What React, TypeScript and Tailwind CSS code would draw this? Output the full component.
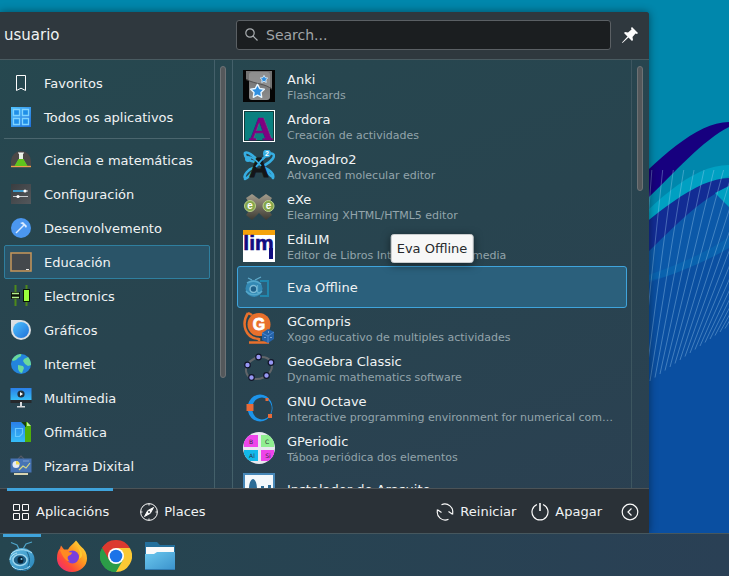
import React, { useState } from "react";

interface Category {
  name: string;
  icon: React.ReactNode;
}

interface AppEntry {
  name: string;
  description?: string;
  icon: React.ReactNode;
}

const Icon22 = ({ children }: { children: React.ReactNode }) => (
  <svg className="size-[22px] shrink-0" viewBox="0 0 22 22" fill="none" aria-hidden="true">
    {children}
  </svg>
);

const Icon32 = ({ children }: { children: React.ReactNode }) => (
  <svg className="size-8 shrink-0" viewBox="0 0 32 32" fill="none" aria-hidden="true">
    {children}
  </svg>
);

const Defs = () => (
  <svg className="absolute size-0" aria-hidden="true">
    <defs>
      <linearGradient id="blue" x1="0" y1="0" x2="1" y2="1">
        <stop offset="0" stopColor="#4fc3ff" />
        <stop offset="1" stopColor="#1f6fd8" />
      </linearGradient>
      <linearGradient id="azure" x1="0" y1="0" x2="0" y2="1">
        <stop offset="0" stopColor="#2a7fe8" />
        <stop offset="1" stopColor="#35bdf8" />
      </linearGradient>
      <linearGradient id="slate" x1="0" y1="0" x2="1" y2="1">
        <stop offset="0" stopColor="#3a3d40" />
        <stop offset="1" stopColor="#54585c" />
      </linearGradient>
      <linearGradient id="anki" x1="0" y1="0" x2="0" y2="1">
        <stop offset="0" stopColor="#6c6c6c" />
        <stop offset="1" stopColor="#8e8e8e" />
      </linearGradient>
      <linearGradient id="exe" x1="0" y1="0" x2="0" y2="1">
        <stop offset="0" stopColor="#a39c8c" />
        <stop offset="1" stopColor="#3c3a32" />
      </linearGradient>
      <linearGradient id="fox" x1="1" y1="0" x2="0" y2="1">
        <stop offset="0" stopColor="#fff044" />
        <stop offset="0.4" stopColor="#ff9a1f" />
        <stop offset="0.7" stopColor="#ff4a3a" />
        <stop offset="1" stopColor="#e8208a" />
      </linearGradient>
      <linearGradient id="folder" x1="0" y1="0" x2="1" y2="1">
        <stop offset="0" stopColor="#6cc8ee" />
        <stop offset="1" stopColor="#3a92cc" />
      </linearGradient>
      <linearGradient id="ball" x1="0" y1="0" x2="1" y2="1">
        <stop offset="0" stopColor="#64bce2" />
        <stop offset="1" stopColor="#2683b8" />
      </linearGradient>
    </defs>
  </svg>
);

const topCategories: Category[] = [
  {
    name: "Favoritos",
    icon: (
      <Icon22>
        <path d="M6.5 3.5h9v15l-4.5-2.3-4.5 2.3z" stroke="#fcfcfc" />
      </Icon22>
    ),
  },
  {
    name: "Todos os aplicativos",
    icon: (
      <Icon22>
        <rect x="1" y="1" width="20" height="20" fill="url(#blue)" />
        <path d="M3.5 3.5h6v6h-6zM12.5 3.5h6v6h-6zM3.5 12.5h6v6h-6zM12.5 12.5h6v6h-6z" fill="#1f8fe8" stroke="#7fd3ff" strokeWidth="1.3" />
      </Icon22>
    ),
  },
];

const categories: Category[] = [
  {
    name: "Ciencia e matemáticas",
    icon: (
      <Icon22>
        <path d="M1 17V12a10 10 0 0 1 20 0v5z" fill="#4b4847" />
        <path d="M1 17.5h20" stroke="#f0a04c" strokeWidth="1.4" />
        <path d="M9 4h4v6l4 7H5l4-7z" fill="#e8f0e4" />
        <path d="M8.500 10h5l4 7h-13z" fill="#5fc41c" />
        <path d="M8 4h6" stroke="#fff" />
      </Icon22>
    ),
  },
  {
    name: "Configuración",
    icon: (
      <Icon22>
        <rect x="1" y="1" width="20" height="20" fill="url(#slate)" />
        <path d="M3 8h12" stroke="#3daee9" strokeWidth="1.6" />
        <path d="M15 8h3M3 13.500h15" stroke="#c8ccd0" />
        <circle cx="15" cy="8" r="1.6" fill="#fff" />
        <circle cx="8" cy="13.500" r="1.6" fill="#fff" />
      </Icon22>
    ),
  },
  {
    name: "Desenvolvemento",
    icon: (
      <Icon22>
        <circle cx="11" cy="11" r="10" fill="#4b97f0" />
        <path d="m6 16 8-8" stroke="#dcecff" strokeWidth="1.4" />
        <path d="m10 6 3-1 4 4-1 2-2.500-3z" fill="#dcecff" />
      </Icon22>
    ),
  },
  {
    name: "Educación",
    icon: (
      <Icon22>
        <rect x="1" y="2" width="20" height="18" fill="#44484c" stroke="#c0935a" strokeWidth="1.6" />
        <path d="M16 18.5h3" stroke="#e6e6e6" />
      </Icon22>
    ),
  },
  {
    name: "Electronics",
    icon: (
      <Icon22>
        <path d="M5.500 0v21M16.500 0v21" stroke="#4e8a1a" strokeWidth="2" />
        <rect x="1" y="7" width="9" height="7" fill="#0c1408" />
        <path d="M2 8.500h7M2 12.500h7" stroke="#b4f08c" strokeWidth="1.300" />
        <rect x="13.500" y="4.500" width="6" height="12" fill="#9bff3c" stroke="#0a1404" />
      </Icon22>
    ),
  },
  {
    name: "Gráficos",
    icon: (
      <Icon22>
        <path d="M1 1h10a10 10 0 1 1-10 10z" fill="#dcdfe2" />
        <circle cx="11" cy="11" r="8" fill="url(#blue)" />
      </Icon22>
    ),
  },
  {
    name: "Internet",
    icon: (
      <Icon22>
        <circle cx="11" cy="11" r="10" fill="#2384dc" />
        <path d="M2 7c2-4 6-6 9-6 1 2-1 3-3 4l-2 2-3 1zM8 12l5 1 1 2-2 5c-2 0-4-3-4-5zM14 6l4-2c2 2 3 5 3 8l-3 1-3-2-2-3z" fill="#6ad89a" />
      </Icon22>
    ),
  },
  {
    name: "Multimedia",
    icon: (
      <Icon22>
        <rect x="0.500" y="1" width="21" height="12" fill="url(#azure)" />
        <path d="M.5 13h21v3H.5z" fill="#26292c" />
        <path d="M10 15h2v4h3v1.500H7V19h3z" fill="#d6d9dc" />
        <circle cx="11" cy="7" r="3.600" fill="#24303c" />
        <path d="m10 5 3 2-3 2z" fill="#fff" />
      </Icon22>
    ),
  },
  {
    name: "Ofimática",
    icon: (
      <Icon22>
        <path d="M9 1h8l4 4v16H9z" fill="#4fae0a" />
        <path d="m17 1 4 4h-4z" fill="#c4f08c" />
        <path d="M11 1h5v5h-1z" fill="#1c3c10" />
        <path d="M1 1h10l4 4v16H1z" fill="url(#azure)" />
        <path d="M5.500 7.500h7v5l-3 3h-4z" stroke="#67c8ff" strokeWidth="1.200" />
      </Icon22>
    ),
  },
  {
    name: "Pizarra Dixital",
    icon: (
      <Icon22>
        <path d="m8 4 3-3 3 3" stroke="#555a66" strokeWidth="1.200" />
        <rect x="0.500" y="3.500" width="21" height="14" fill="#4773b4" />
        <circle cx="6" cy="9.500" r="3.500" fill="#e6ecf4" />
        <path d="M6 9.500V6a3.500 3.500 0 0 1 3.500 3.500z" fill="#f2dc50" />
        <path d="m9 15 4-4 3 2 4-5" stroke="#d8d880" strokeWidth="1.200" />
        <path d="M13 6h6" stroke="#7fa0d0" />
        <path d="M4 18h14v2H4z" fill="#d8d4b0" />
      </Icon22>
    ),
  },
];

const Star = () => (
  <path d="m0-6 2 3.700 4.200.7-3 3 .6 4.300L0 3.800l-3.800 1.900.6-4.300-3-3 4.200-.7z" fill="#2f8fe0" stroke="#e8f6ff" strokeWidth="1.300" strokeLinejoin="round" />
);

const apps: AppEntry[] = [
  {
    name: "Anki",
    description: "Flashcards",
    icon: (
      <Icon32>
        <rect width="32" height="32" fill="#050505" />
        <rect x="6" y="2" width="21" height="28" rx="3" fill="url(#anki)" />
        <path d="M3 1h26v18c-6-6-16-5-26-10z" fill="#9a9a9a" fillOpacity="0.75" />
        <path d="M3 9.500c10 5 20 4 26 10" stroke="#4a4a4a" strokeWidth="0.800" />
        <g transform="translate(21 9) scale(.6)"><Star /></g>
        <g transform="translate(14.500 21) scale(1.100)"><Star /></g>
      </Icon32>
    ),
  },
  {
    name: "Ardora",
    description: "Creación de actividades",
    icon: (
      <Icon32>
        <rect width="32" height="32" fill="#fff" />
        <rect x="1.500" y="1.500" width="29" height="29" fill="#0a8080" stroke="#103c3c" />
        <text x="18" y="30" textAnchor="middle" fill="#800080" stroke="#800080" strokeWidth="0.600" fontSize="33" fontWeight="700" fontFamily="Liberation Serif, serif">A</text>
      </Icon32>
    ),
  },
  {
    name: "Avogadro2",
    description: "Advanced molecular editor",
    icon: (
      <Icon32>
        <path d="M2 3c2-2 8 2 14 9s11 15 14 15M2 29c5-1 9-10 14-16S27 2 30 4s-2 8-8 11M2 3c-1 4 4 8 10 9M2 28c-2-3 4-9 8-10M22 18c6 3 9 7 8 10" stroke="#36aee2" strokeWidth="2.600" strokeLinecap="round" />
        <text x="16" y="27" textAnchor="middle" fill="#141618" stroke="#141618" fontSize="27" fontWeight="700" fontFamily="Liberation Sans, sans-serif">A</text>
        <path d="M7 7c3 1 8 5 11 9M13 17c3-4 6-8 9-10" stroke="#36aee2" strokeWidth="1.800" />
        <circle cx="5" cy="9" r="3" fill="#36aee2" />
        <circle cx="24" cy="3.500" r="4" fill="#36aee2" />
        <text x="24" y="6" textAnchor="middle" fill="#fff" fontSize="7" fontWeight="700" fontFamily="Liberation Sans, sans-serif">2</text>
      </Icon32>
    ),
  },
  {
    name: "eXe",
    description: "Elearning XHTML/HTML5 editor",
    icon: (
      <Icon32>
        <path d="m3 8 6-4 7 5 7-5 6 4-6 9 6 8-6 5-7-7-7 7-6-5 6-8z" fill="url(#exe)" />
        <circle cx="7" cy="16" r="5.500" fill="#86a74a" stroke="#b9cf8c" />
        <circle cx="25.500" cy="16" r="5.500" fill="#86a74a" stroke="#b9cf8c" />
        <text x="7" y="19" textAnchor="middle" fill="#fff" fontSize="10" fontWeight="700" fontFamily="Liberation Sans, sans-serif">e</text>
        <text x="25.500" y="19" textAnchor="middle" fill="#fff" fontSize="10" fontWeight="700" fontFamily="Liberation Sans, sans-serif">e</text>
      </Icon32>
    ),
  },
  {
    name: "EdiLIM",
    description: "Editor de Libros Interactivos Multimedia",
    icon: (
      <Icon32>
        <rect width="32" height="32" fill="#fff" />
        <rect width="32" height="5" fill="#f5a20a" />
        <text x="15.500" y="20" textAnchor="middle" fill="#100c80" stroke="#100c80" strokeWidth="0.600" fontSize="21" fontWeight="700" fontFamily="Liberation Sans, sans-serif">lim</text>
        <rect x="26" y="18" width="4" height="11" fill="#100c80" />
      </Icon32>
    ),
  },
  {
    name: "Eva Offline",
    icon: (
      <Icon32>
        <path d="M17 10h8v15h-8" stroke="#2186ac" strokeWidth="2" />
        <circle cx="11" cy="17.500" r="8.500" fill="#3389b4" />
        <path d="M4 12c5-3 10-2 14 1M3 20c4 5 12 5 16 0" stroke="#55a7ca" strokeWidth="1.500" />
        <circle cx="10.500" cy="18" r="3.500" fill="#1f6088" stroke="#7dbbd6" strokeWidth="1.500" />
        <path d="M14.500 14v7c1 1 2 1 3 0M9 9 5 7M12 9l6-3" stroke="#5fabcc" strokeWidth="1.200" />
      </Icon32>
    ),
  },
  {
    name: "GCompris",
    description: "Xogo educativo de multiples actividades",
    icon: (
      <Icon32>
        <path d="M5 1C-2 12 2 26 16 27M16 26v3M6 30.500h20M5 1l4 2" stroke="#e8702c" strokeWidth="2.500" />
        <circle cx="16" cy="12.500" r="11.500" fill="#e8702c" />
        <text x="16" y="18" textAnchor="middle" fill="#fff" stroke="#fff" strokeWidth="0.800" fontSize="16" fontWeight="700" fontFamily="Liberation Sans, sans-serif">G</text>
        <path d="m25 17 6 3v7l-6 4-6-3v-7z" fill="#2462a8" />
        <path d="m19 21 6 3 6-4M25 24v7" stroke="#5f9ade" strokeWidth="0.700" />
        <path d="M22 25v1M28 25v1M25 20h1" stroke="#cfe4ff" />
      </Icon32>
    ),
  },
  {
    name: "GeoGebra Classic",
    description: "Dynamic mathematics software",
    icon: (
      <Icon32>
        <ellipse cx="16" cy="16" rx="13.500" ry="10.500" transform="rotate(-25 16 16)" stroke="#62666a" strokeWidth="2" />
        <g fill="#9898f4" stroke="#111528" strokeWidth="1.200">
          <circle cx="15.500" cy="5" r="2.800" />
          <circle cx="28" cy="10.500" r="2.800" />
          <circle cx="23.500" cy="23.500" r="2.800" />
          <circle cx="8.500" cy="25.500" r="2.800" />
          <circle cx="4.500" cy="13" r="2.800" />
        </g>
      </Icon32>
    ),
  },
  {
    name: "GNU Octave",
    description: "Interactive programming environment for numerical computations",
    icon: (
      <Icon32>
        <path fillRule="evenodd" d="M17 2.500a12.500 13.500 0 1 0 .1 0zM19 5.500a9.800 11 0 1 1-.1 0z" fill="#1c94ea" />
        <rect x="3.500" y="12" width="7" height="7" fill="#e86a38" />
        <rect x="22.500" y="6" width="3" height="3" fill="#e86a38" />
        <rect x="25" y="22" width="4" height="4" fill="#e86a38" />
      </Icon32>
    ),
  },
  {
    name: "GPeriodic",
    description: "Táboa periódica dos elementos",
    icon: (
      <Icon32>
        <clipPath id="disc"><circle cx="16" cy="16" r="16" /></clipPath>
        <g clipPath="url(#disc)">
          <rect width="32" height="32" fill="#e8e8f0" />
          <path d="M1 3h14v12H1zM18 18h13v11H18z" fill="#ee44ea" />
          <path d="M18 3h13v12H18z" fill="#90ee90" />
          <path d="M1 18h14v11H1z" fill="#12b8ea" />
        </g>
        <g fill="#30303c" fontSize="6" fontFamily="DejaVu Sans, sans-serif" textAnchor="middle">
          <text x="8" y="12">B</text>
          <text x="24" y="12">C</text>
          <text x="9" y="26">Al</text>
          <text x="25" y="26">Si</text>
        </g>
      </Icon32>
    ),
  },
  {
    name: "Instalador de Arasuite",
    icon: (
      <Icon32>
        <rect x="1" y="1" width="30" height="30" fill="#f4f8fb" stroke="#4888b8" strokeWidth="2" />
        <path d="M6 16c0-6 2-10 4-10s4 4 4 10zM18 13h3v4h-3zM25 12h3v5h-3z" fill="#2d6c96" />
        <path d="M5 16h10" stroke="#2d6c96" strokeWidth="2" />
      </Icon32>
    ),
  },
];

// fan of thin strokes that opens upwards from the diagonal edge of the wave
const rays = Array.from({ length: 19 }, (_, n) => {
  const i = n - 3;
  const x = 650 + 5 * i;
  const y = 381 - 3.5 * i;
  return { x, y, top: x + (y - 170) * (0.16 + 0.028 * i) };
});

const Wallpaper = () => (
  <svg className="absolute inset-0 size-full" viewBox="0 0 729 576" preserveAspectRatio="xMaxYMin slice" fill="none" aria-hidden="true">
    <rect width="729" height="576" fill="#0087ac" />
    <path d="M600 260C650 205 690 165 729 165v411H600z" fill="#00a0c2" />
    <path d="M600 275C650 210 685 192 729 176v400H600z" fill="#0090b4" />
    <path d="M600 262C650 218 695 178 729 178v398H600z" fill="#122c94" />
    <path d="M600 300C660 242 690 205 729 186v390H600z" fill="#0b58a8" />
    <path d="m715 193 14-7v21z" fill="#00a0c2" />
    <path d="M600 290c50-14 95-30 129-53v20c-40 16-85 24-129 36z" fill="#0962ae" />
    <path d="M600 296c50-12 95-28 129-48v328H600z" fill="#0a4fa1" />
    <path d="M620 198c37-38 76-76 109-76v5c-25 12-57 48-80 70l-29 25z" fill="#17007f" />
    {rays.map((ray) => (
      <path key={ray.x} d={`M${ray.x} ${ray.y}L${ray.top} 170`} stroke="#a9d4f4" strokeOpacity="0.4" strokeWidth="0.9" />
    ))}
  </svg>
);

const CategoryButton = ({ item, active, onSelect }: { item: Category; active: boolean; onSelect: () => void }) => (
  <button
    type="button"
    onClick={onSelect}
    className={`flex h-[34px] w-full shrink-0 items-center gap-3 rounded-[2px] border pl-[5px] text-left ${
      active ? "border-[#2f7f9f] bg-[#2a5468]" : "border-transparent"
    }`}
  >
    {item.icon}
    <span className="pt-0.5">{item.name}</span>
  </button>
);

const App: React.FC = () => {
  const [category, setCategory] = useState("Educación");
  const [search, setSearch] = useState("");
  const selected = "Eva Offline";

  return (
    <div className="relative flex h-screen flex-col overflow-hidden font-['DejaVu_Sans',sans-serif] text-[13px] leading-4 text-[#f0f3f4]">
      <Defs />
      <Wallpaper />
      <main className="relative mt-3 mr-20 flex min-h-0 flex-1 flex-col rounded-tr-[3px] bg-linear-160 from-[#26484f] via-[#28444f] to-[#2b4052] shadow-[0_0_8px_rgba(0,0,0,0.45)]">
        <header className="flex h-12 shrink-0 items-center rounded-tr-[3px] border-b border-[#4a5b61] bg-[#2f383e] pb-0.5">
          <h1 className="w-[236px] shrink-0 pl-1 text-[15px] leading-5">usuario</h1>
          <label className="flex h-[30px] min-w-0 flex-1 items-center gap-2 rounded-[3px] border border-[#5b6064] bg-[#1b1e20] pl-2">
            <svg className="size-[13px] shrink-0" viewBox="0 0 13 13" fill="none" stroke="#a9adb0" strokeWidth="1.2" aria-hidden="true">
              <circle cx="5" cy="5" r="4.200" />
              <path d="m8 8 4.500 4.500" />
            </svg>
            <input
              type="text"
              aria-label="Search"
              placeholder="Search..."
              value={search}
              onChange={(e) => setSearch(e.target.value)}
              className="min-w-0 flex-1 bg-transparent text-[14px] outline-none placeholder:text-[#a1a5a8]"
            />
          </label>
          <button type="button" aria-label="Pin" className="flex w-[38px] shrink-0 justify-center">
            <svg className="size-[18px]" viewBox="0 0 18 18" aria-hidden="true">
              <path d="m11 1 6 6-1 1-1.500-.5L11.500 11l.5 3-1 1L7.500 11.500 1.500 17l-.500-.500L6.500 10.500 3 7l1-1 3 .5L10.500 3.500 10 2z" fill="#fcfcfc" />
            </svg>
          </button>
        </header>

        <div className="flex min-h-0 flex-1">
          <nav className="flex w-[214px] shrink-0 flex-col overflow-hidden px-1 pt-1.5">
            {topCategories.map((item) => (
              <CategoryButton key={item.name} item={item} active={category === item.name} onSelect={() => setCategory(item.name)} />
            ))}
            <hr className="my-1 border-[#4b666e]" />
            {categories.map((item) => (
              <CategoryButton key={item.name} item={item} active={category === item.name} onSelect={() => setCategory(item.name)} />
            ))}
          </nav>
          <div className="w-[19px] shrink-0 border-x border-[#44606a] px-[5px] py-1.5">
            <div className="h-3/4 w-1.5 rounded-full border border-[#6d7275] bg-[#54585b]" />
          </div>

          <ul className="min-w-0 flex-1 overflow-hidden px-1 pt-1.5">
            {apps.map((app) => (
              <li key={app.name} className="relative">
                <button
                  type="button"
                  className={`flex w-full items-center gap-3 rounded-[3px] border px-[5px] text-left ${app.description ? "h-10" : "h-[42px]"} ${
                    app.name === selected ? "border-[#3fa4dc] bg-[#2b607c]" : "border-transparent"
                  }`}
                >
                  {app.icon}
                  <span className={`min-w-0 flex-1 pr-1 ${app.description ? "pt-1" : "pt-0.5"}`}>
                    <span className="block truncate">{app.name}</span>
                    {app.description && <span className="block truncate text-[11px] text-[#93a4ab]">{app.description}</span>}
                  </span>
                </button>
                {app.name === selected && (
                  <span role="tooltip" className="absolute bottom-full left-1/2 mb-[3px] -translate-x-1/2 rounded-[3px] border border-[#c9cccd] bg-[#f7f7f7] px-[5px] pt-1.5 pb-[5px] whitespace-nowrap text-[#26292c] shadow-[0_2px_8px_rgba(0,0,0,0.5)]">
                    Eva Offline
                  </span>
                )}
              </li>
            ))}
          </ul>
          <div className="w-[18px] shrink-0 border-l border-[#3d5660] px-[5px] py-1.5">
            <div className="h-[30%] w-1.5 rounded-full border border-[#6d7275] bg-[#54585b]" />
          </div>
        </div>

        <footer className="flex h-[45px] shrink-0 items-center justify-between border-t border-[#4c5357] bg-[#2a3137] pr-2.5 pl-[7px]">
          <div className="flex h-full items-center gap-[22px]">
            <button type="button" className="relative flex h-full items-center gap-1.5 pt-0.5 pr-1 pl-[5px]">
              <span className="absolute inset-x-0 -top-px h-[3px] bg-[#3fa4dc]" />
              <svg className="size-[18px]" viewBox="0 0 18 18" fill="none" stroke="#fcfcfc" aria-hidden="true">
                <path d="M1.500 1.500h6v6h-6zM10.500 1.500h6v6h-6zM1.500 10.500h6v6h-6zM10.500 10.500h6v6h-6z" />
              </svg>
              Aplicacións
            </button>
            <button type="button" className="flex h-full items-center gap-1.5 pt-0.5 pr-1 pl-[5px]">
              <svg className="size-[18px]" viewBox="0 0 18 18" fill="none" stroke="#fcfcfc" aria-hidden="true">
                <circle cx="9" cy="9" r="8.400" />
                <path d="M9 1v1.500M9 15.500V17M1 9h1.500M15.500 9H17" />
                <path d="M13.500 4.500 10.300 10.300 4.500 13.500 7.700 7.700z" fill="#fcfcfc" />
                <circle cx="9" cy="9" r="1" fill="#2a3137" stroke="none" />
              </svg>
              Places
            </button>
          </div>
          <div className="flex items-center gap-[15px] pt-0.5">
            <button type="button" className="flex items-center gap-1.5">
              <svg className="size-[18px]" viewBox="0 0 18 18" fill="none" stroke="#fcfcfc" strokeWidth="1.100" aria-hidden="true">
                <path d="M5.500 1.700A8 8 0 0 1 16.500 11M12.500 16.300A8 8 0 0 1 1.500 7M12.500 8.500l4 2.700M5.500 9.500l-4-2.700M16.700 8v3.500M1.300 10V6.500" />
              </svg>
              Reiniciar
            </button>
            <button type="button" className="flex items-center gap-1.5">
              <svg className="size-[18px]" viewBox="0 0 18 18" fill="none" stroke="#fcfcfc" strokeWidth="1.200" aria-hidden="true">
                <path d="M6 1.500a8 8 0 1 0 6 0" />
                <path d="M9 0v8" strokeWidth="1.600" />
              </svg>
              Apagar
            </button>
            <button type="button" aria-label="Saír" className="ml-1">
              <svg className="block size-[18px]" viewBox="0 0 18 18" fill="none" stroke="#fcfcfc" strokeWidth="1.200" aria-hidden="true">
                <circle cx="9" cy="9" r="7.800" />
                <path d="M10.500 5.500 7 9l3.500 3.500" />
              </svg>
            </button>
          </div>
        </footer>
      </main>

      <nav className="relative flex h-[43px] shrink-0 items-center border-t border-[#46575e] bg-linear-to-r from-[#25454f] to-[#2a4055]">
        <button type="button" aria-label="Menu" className="relative mr-1.5 flex h-full w-11 items-center justify-center pt-0.5">
          <span className="absolute inset-x-[3px] top-0 h-[3px] bg-[#3fa4dc]" />
          <Icon32>
            <path d="M13 9 11 5 5 2.500M17 9l3-5 6-2" stroke="#4fa4c8" strokeWidth="1.200" />
            <ellipse cx="16" cy="19.500" rx="12.500" ry="11.500" fill="url(#ball)" />
            <path d="M5 14c5-5 14-6 21-1M6 26c5 5 13 5 18 0M4 20c0-3 3-6 7-7" stroke="#b4e2f4" />
            <path d="M21 12c3 5 3 10 1 14M8 29c4 2 9 2 13 0" stroke="#17587c" />
            <ellipse cx="14" cy="20" rx="7" ry="5.500" fill="#1d5f86" stroke="#9cd6ee" strokeWidth="1.500" />
            <ellipse cx="14.500" cy="20" rx="3" ry="3.500" fill="#0a2233" />
            <circle cx="15.500" cy="19" r="1" fill="#7cc6e6" />
          </Icon32>
        </button>
        <button type="button" aria-label="Firefox" className="flex h-full w-11 items-center justify-center pt-0.5">
          <Icon32>
            <path d="M20 .5c2 2 3 4 5 6 4 3 6 7 6 12a15 13.500 0 0 1-30 0c0-5 1-8 3-10l1-3 3 4 4 0c2-4 5-5 8-9z" fill="url(#fox)" />
            <circle cx="16.500" cy="17" r="6.500" fill="#7a3fdc" />
            <path d="M4 10c3-1 6 0 8 2l4 .5c0 2-3 3-4 4s0 4 2 5c-4 0-7-4-10-11.500z" fill="#ff8a22" />
            <path d="M19 4c5 5 6 9 4 15 2-1 3-3 3-3 1-5-3-8-7-12z" fill="#ffc830" />
          </Icon32>
        </button>
        <button type="button" aria-label="Chrome" className="flex h-full w-11 items-center justify-center pt-0.5">
          <Icon32>
            <path d="M16 16 2.140 8A16 16 0 0 1 29.860 8z" fill="#dc3a2f" />
            <path d="M16 16 29.860 8A16 16 0 0 1 16 32z" fill="#fcc934" />
            <path d="M16 16v16A16 16 0 0 1 2.140 8z" fill="#2c9c48" />
            <path d="M16 8h13.860L22 20z" fill="#fcc934" />
            <path d="M2.140 8 9 20l7-12V6L3.400 6z" fill="#dc3a2f" />
            <path d="M2.140 8 9.100 20 14 24l8.900-4L16 32A16 16 0 0 1 2.140 8z" fill="#2c9c48" />
            <circle cx="16" cy="16" r="8" fill="#fff" />
            <circle cx="16" cy="16" r="6.300" fill="#1b73e8" />
          </Icon32>
        </button>
        <button type="button" aria-label="Files" className="flex h-full w-11 items-center justify-center pt-0.5">
          <Icon32>
            <path d="M1 2h12l3 3h15v12H1z" fill="#25709c" />
            <path d="M2 7h28v8H2z" fill="#fafafa" />
            <path d="M1 14h9l3-2h18v18H1z" fill="url(#folder)" />
            <path d="M1 29.500h30" stroke="#2f7ab0" />
          </Icon32>
        </button>
      </nav>
    </div>
  );
};

export default App;
